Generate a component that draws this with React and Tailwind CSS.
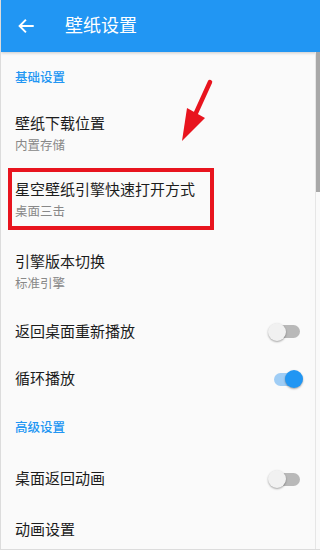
import React from "react";

const font = { fontFamily: '"Roboto", "Noto Sans CJK SC", sans-serif' };

function Switch({ on }) {
  return (
    <div className="relative w-[32px] h-[20px] flex items-center">
      <div className={`absolute left-[4px] right-[2px] h-[13px] rounded-full ${on ? "bg-[#9fcdf5]" : "bg-[#b9b9b9]"}`} />
      <div
        className={`absolute top-[1px] w-[18px] h-[18px] rounded-full shadow-[0_1px_2px_rgba(0,0,0,0.35)] ${on ? "right-[-1px] bg-[#2196f3]" : "left-[-2px] bg-[#f1f1f1]"}`}
      />
    </div>
  );
}

function TwoLine({ title, sub, h }) {
  return (
    <div className={`flex flex-col justify-center gap-[2px] px-[14px] ${h}`}>
      <div className="text-[15px] leading-[20px] text-[#1c1c1c]">{title}</div>
      <div className="text-[12.5px] leading-[20px] text-[#888888]">{sub}</div>
    </div>
  );
}

function SwitchRow({ title, on, h }) {
  return (
    <div className={`flex items-center justify-between pl-[14px] pr-[18px] ${h}`}>
      <div className="text-[15px] leading-[20px] text-[#1c1c1c]">{title}</div>
      <Switch on={on} />
    </div>
  );
}

function Section({ title, h }) {
  return (
    <div className={`flex items-center px-[14px] ${h}`}>
      <div className="text-[12.5px] font-medium text-[#2196f3]">{title}</div>
    </div>
  );
}

export default function App() {
  return (
    <div style={font} className="relative w-[320px] h-[550px] overflow-hidden bg-[#fafafa] border-l border-b border-[#dcdcdc]">
      <div className="h-[52px] bg-[#2196f3] flex items-center shadow-[0_1px_3px_rgba(0,0,0,0.2)]">
        <div className="w-[64px] flex items-center pl-[16px]">
          <svg width="18" height="18" viewBox="0 0 24 24" fill="none" stroke="white" strokeWidth="2.6" strokeLinecap="square">
            <path d="M21 12H4M11 4.5L3.5 12l7.5 7.5" />
          </svg>
        </div>
        <div className="text-white text-[18px] leading-none">壁纸设置</div>
      </div>
      <Section title="基础设置" h="h-[52px]" />
      <TwoLine title="壁纸下载位置" sub="内置存储" h="h-[61px]" />
      <TwoLine title="星空壁纸引擎快速打开方式" sub="桌面三击" h="h-[72px]" />
      <TwoLine title="引擎版本切换" sub="标准引擎" h="h-[71px]" />
      <SwitchRow title="返回桌面重新播放" on={false} h="h-[47px]" />
      <SwitchRow title="循环播放" on={true} h="h-[48px]" />
      <Section title="高级设置" h="h-[50px]" />
      <SwitchRow title="桌面返回动画" on={false} h="h-[52px]" />
      <div className="flex items-center px-[14px] h-[50px]">
        <div className="text-[15px] leading-[20px] text-[#1c1c1c]">动画设置</div>
      </div>

      {/* scrollbar */}
      <div className="absolute right-0 top-[52px] w-[4px] h-[140px] bg-[#a8a8a8]" />
      <div className="absolute right-[4px] top-[52px] bottom-0 w-px bg-[#e6e6e6]" />

      {/* annotation box */}
      <div className="absolute left-[7px] top-[168px] w-[206px] h-[62px] border-[4px] border-[#e8141e]" />
      {/* annotation arrow */}
      <svg className="absolute left-[170px] top-[70px]" width="50" height="80" viewBox="0 0 50 80">
        <path d="M39 12 L24 45" stroke="#e8141e" strokeWidth="4.5" strokeLinecap="round" />
        <path d="M11 71 L16 38 L34 48 Z" fill="#e8141e" />
      </svg>
    </div>
  );
}
